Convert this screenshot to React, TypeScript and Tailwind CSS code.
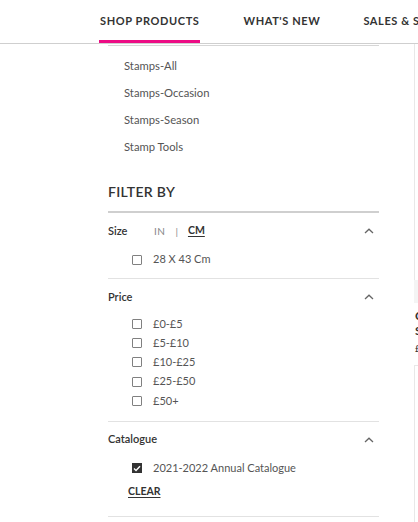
import React from 'react';

const font = { fontFamily: '"Lato", "Open Sans", sans-serif' };

const ChevronUp = () => (
  <svg width="10" height="6" viewBox="0 0 10 6" className="text-[#666]">
    <path d="M1 5L5 1.2L9 5" fill="none" stroke="currentColor" strokeWidth="1.3" />
  </svg>
);

const Box: React.FC<{ checked?: boolean }> = ({ checked }) =>
  checked ? (
    <span className="w-[10px] h-[10px] bg-[#333] flex items-center justify-center">
      <svg width="8" height="7" viewBox="0 0 8 7">
        <path d="M1 3.6L3 5.5L7 1.2" fill="none" stroke="white" strokeWidth="1.4" />
      </svg>
    </span>
  ) : (
    <span className="w-[10px] h-[10px] border border-[#808080] rounded-[1px]" />
  );

const Option: React.FC<{ label: string; checked?: boolean; className?: string }> = ({ label, checked, className }) => (
  <div className={`flex items-center gap-[11px] pl-[24px] h-[19.25px] ${className ?? ''}`}>
    <Box checked={checked} />
    <span className="text-[11px] text-[#555]">{label}</span>
  </div>
);

const GroupHead: React.FC<{ title: string; children?: React.ReactNode }> = ({ title, children }) => (
  <div className="flex items-center h-[36px] pr-[5px]">
    <span className="text-[11px] font-semibold text-[#333] w-[46px]">{title}</span>
    <div className="flex-1 flex items-center">{children}</div>
    <ChevronUp />
  </div>
);

export default function App() {
  const links = ['Stamps-All', 'Stamps-Occasion', 'Stamps-Season', 'Stamp Tools'];
  return (
    <div className="w-[418px] h-[522px] bg-white overflow-hidden relative" style={font}>
      {/* top nav */}
      <div className="h-[44px] border-b border-[#cfcfcf] flex items-end pl-[99px] gap-[43px] text-[11px] font-bold tracking-[0.6px] text-[#333] whitespace-nowrap overflow-hidden">
        <div className="relative h-full flex items-center px-[1px]">
          SHOP PRODUCTS
          <span className="absolute left-0 right-0 bottom-[-1px] h-[4px] bg-[#ec0c84]" />
        </div>
        <div className="h-full flex items-center">WHAT'S NEW</div>
        <div className="h-full flex items-center pr-[4px]">SALES &amp; SPECIALS</div>
      </div>

      <div className="flex">
        {/* left sidebar */}
        <div className="w-[271px] ml-[108px] shrink-0">
          <div className="h-[1px] bg-[#d6d6d6] mt-[1px]" />
          <div className="pl-[16px] pt-[7px] flex flex-col text-[11.25px] text-[#555]">
            {links.map((l) => (
              <div key={l} className="h-[27px] flex items-center">{l}</div>
            ))}
          </div>

          <div className="mt-[21px] text-[14px] font-semibold text-[#333] tracking-[0.3px] leading-[20px]">FILTER BY</div>
          <div className="h-[2px] bg-[#cfcfcf] mt-[9px]" />

          <GroupHead title="Size">
            <span className="text-[10px] text-[#888] tracking-[0.5px]">IN</span>
            <span className="text-[10px] text-[#888] mx-[10px]">|</span>
            <span className="text-[10.5px] font-bold text-[#333] underline underline-offset-2">CM</span>
          </GroupHead>
          <Option label="28 X 43 Cm" className="mt-[1px]" />
          <div className="h-[1px] bg-[#e2e2e2] mt-[9px]" />

          <GroupHead title="Price" />
          <div className="-mt-[1px]">
            {['£0-£5', '£5-£10', '£10-£25', '£25-£50', '£50+'].map((p) => (
              <Option key={p} label={p} />
            ))}
          </div>
          <div className="h-[1px] bg-[#e2e2e2] mt-[10px]" />

          <GroupHead title="Catalogue" />
          <Option label="2021-2022 Annual Catalogue" checked className="mt-[1px]" />
          <div className="pl-[20px] mt-[5px] h-[19px] flex items-center text-[10.5px] font-bold text-[#333] underline underline-offset-2">CLEAR</div>
          <div className="h-[1px] bg-[#e2e2e2] mt-[14px]" />
        </div>

        {/* product grid peeking at right */}
        <div className="ml-[35px] flex-1 flex flex-col min-w-0">
          <div className="h-[236px] border-l border-[#e8e8e8]" />
          <div className="h-[23px] bg-[#f4f4f4]" />
          <div className="pt-[5px] pl-[1px] text-[12px] font-bold text-[#333] leading-[15px] whitespace-nowrap">
            <div>C</div>
            <div>S</div>
            <div className="font-normal text-[10px] mt-[3px] leading-[14px]">£</div>
          </div>
          <div className="mt-[10px] h-[200px] border-l border-t border-[#e8e8e8]" />
        </div>
      </div>
    </div>
  );
}
